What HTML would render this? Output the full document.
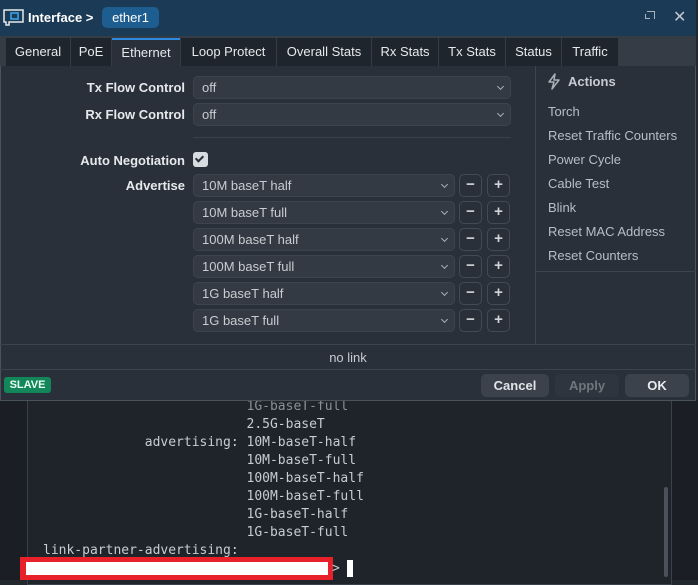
<!DOCTYPE html>
<html><head><style>
*{box-sizing:border-box;margin:0;padding:0}
body{width:698px;height:580px;overflow:hidden;background:#23282f;font-family:"Liberation Sans",sans-serif;position:relative;font-size:13px}
.abs{position:absolute}
.term{left:0;top:400px;width:698px;height:180px;background:#1b1f25}
.tbox{left:27px;top:395px;width:645px;height:190px;border:1px solid #3a414a;background:#1f242b}
.mono{font-family:"DejaVu Sans Mono","Liberation Mono",monospace;font-size:13px;color:#c7ccd2;white-space:pre;line-height:18px}
.dlg{left:0;top:0;width:696px;height:401px;background:#2a3039;border:1px solid #4a525c;border-top:none}
.title{left:0;top:0;width:696px;height:36px;background:#1b3a56}
.tabs{left:0;top:36px;width:696px;height:30px;background:#363c45}
.tab{position:absolute;top:38px;height:28px;background:#1f252d;color:#e6e9ec;font-size:13px;line-height:28px;text-align:center}
.lbl{position:absolute;color:#e6e9ec;font-weight:bold;font-size:13px;text-align:right;width:180px;left:5px}
.sel{position:absolute;height:23px;background:#343a43;border:1px solid #3d444d;border-radius:5px;color:#c9cdd2;font-size:13px;line-height:21px;padding-left:8px}
.sel:after{content:"";position:absolute;right:7px;top:7px;width:4px;height:4px;border-right:1.3px solid #aab0b7;border-bottom:1.3px solid #aab0b7;transform:rotate(45deg)}
.btn{position:absolute;width:23px;height:23px;border:1px solid #434a53;border-radius:5px;color:#d0d4d8;font-weight:bold;text-align:center;line-height:20px;font-size:15px}
.act{position:absolute;left:548px;color:#b7bec6;font-size:13px}
.fb{position:absolute;top:374px;height:23px;border-radius:5px;font-weight:bold;font-size:13px;text-align:center;line-height:23px}
</style></head><body>
<div class="abs term"></div>
<div class="abs tbox"></div>
<div class="abs mono" style="left:43px;top:398px"><span style="color:#8a9098">                          1G-baseT-full</span>
                          2.5G-baseT
             advertising: 10M-baseT-half
                          10M-baseT-full
                          100M-baseT-half
                          100M-baseT-full
                          1G-baseT-half
                          1G-baseT-full
link-partner-advertising:</div>
<div class="abs" style="left:664px;top:487px;width:4px;height:90px;background:#4a525c;border-radius:2px"></div>
<div class="abs" style="left:20px;top:557px;width:313px;height:23px;background:#e8202a"></div>
<div class="abs" style="left:26px;top:562px;width:302px;height:13px;background:#fff"></div>
<div class="abs mono" style="left:332px;top:560px">&gt;</div>
<div class="abs" style="left:347px;top:560px;width:6px;height:17px;background:#fff"></div>

<div class="abs dlg"></div>
<div class="abs title"></div>
<svg class="abs" style="left:3px;top:8px" width="21" height="18" viewBox="0 0 21 18"><path d="M1 2h19v12H6v3H3v-3H1z" fill="none" stroke="#e6e9ec" stroke-width="1.5"/><rect x="8" y="5" width="7" height="6" fill="none" stroke="#3aa0e8" stroke-width="1.6"/></svg>
<div class="abs" style="left:28px;top:10px;color:#fff;font-weight:bold;font-size:13px">Interface &gt;</div>
<div class="abs" style="left:102px;top:7px;width:57px;height:21px;background:#1e5d8f;border-radius:5px;color:#fff;font-size:13px;line-height:21px;text-align:center">ether1</div>
<div class="abs" style="left:647px;top:11px;width:8px;height:8px;border-top:1.5px solid #aab3bd;border-right:1.5px solid #aab3bd"></div>
<div class="abs" style="left:645px;top:14px;width:5px;height:5px;border-bottom:1.5px solid #aab3bd;border-left:1.5px solid #aab3bd"></div>
<div class="abs" style="left:673px;top:7px;color:#c0c7cf;font-size:16px">✕</div>
<div class="abs tabs"></div>
<div class="tab" style="left:6px;width:64px">General</div>
<div class="tab" style="left:71px;width:40px">PoE</div>
<div class="tab" style="left:112px;width:68px;background:#2a3039;border-top:2px solid #2a8be0;line-height:25px">Ethernet</div>
<div class="tab" style="left:181px;width:95px">Loop Protect</div>
<div class="tab" style="left:277px;width:94px">Overall Stats</div>
<div class="tab" style="left:372px;width:66px">Rx Stats</div>
<div class="tab" style="left:439px;width:66px">Tx Stats</div>
<div class="tab" style="left:506px;width:55px">Status</div>
<div class="tab" style="left:562px;width:56px">Traffic</div>

<div class="lbl" style="top:80px">Tx Flow Control</div>
<div class="sel" style="left:193px;top:76px;width:318px">off</div>
<div class="lbl" style="top:107px">Rx Flow Control</div>
<div class="sel" style="left:193px;top:103px;width:318px">off</div>
<div class="abs" style="left:193px;top:137px;width:318px;height:1px;background:#3a414a"></div>
<div class="lbl" style="top:153px">Auto Negotiation</div>
<div class="abs" style="left:193px;top:152px;width:15px;height:15px;background:#d8dce0;border-radius:3px"></div>
<div class="abs" style="left:197px;top:154px;width:5px;height:8px;border-right:2px solid #2a3039;border-bottom:2px solid #2a3039;transform:rotate(45deg)"></div>
<div class="lbl" style="top:178px">Advertise</div>

<div class="sel" style="left:193px;top:174px;width:262px">10M baseT half</div>
<div class="sel" style="left:193px;top:201px;width:262px">10M baseT full</div>
<div class="sel" style="left:193px;top:228px;width:262px">100M baseT half</div>
<div class="sel" style="left:193px;top:255px;width:262px">100M baseT full</div>
<div class="sel" style="left:193px;top:282px;width:262px">1G baseT half</div>
<div class="sel" style="left:193px;top:309px;width:262px">1G baseT full</div>
<div class="btn" style="left:459px;top:174px">−</div><div class="btn" style="left:487px;top:174px">+</div>
<div class="btn" style="left:459px;top:201px">−</div><div class="btn" style="left:487px;top:201px">+</div>
<div class="btn" style="left:459px;top:228px">−</div><div class="btn" style="left:487px;top:228px">+</div>
<div class="btn" style="left:459px;top:255px">−</div><div class="btn" style="left:487px;top:255px">+</div>
<div class="btn" style="left:459px;top:282px">−</div><div class="btn" style="left:487px;top:282px">+</div>
<div class="btn" style="left:459px;top:309px">−</div><div class="btn" style="left:487px;top:309px">+</div>

<div class="abs" style="left:535px;top:66px;width:1px;height:278px;background:#3d444d"></div>
<div class="abs" style="left:536px;top:271px;width:160px;height:1px;background:#3d444d"></div>
<svg class="abs" style="left:546px;top:73px" width="16" height="17" viewBox="0 0 16 17"><path d="M9 1L3 9h5l-2 7 7-9H8z" fill="none" stroke="#aab0b7" stroke-width="1.5" stroke-linejoin="round"/></svg>
<div class="abs" style="left:568px;top:74px;color:#c6ccd2;font-weight:bold;font-size:13px">Actions</div>
<div class="act" style="top:104px">Torch</div>
<div class="act" style="top:128px">Reset Traffic Counters</div>
<div class="act" style="top:152px">Power Cycle</div>
<div class="act" style="top:176px">Cable Test</div>
<div class="act" style="top:200px">Blink</div>
<div class="act" style="top:224px">Reset MAC Address</div>
<div class="act" style="top:248px">Reset Counters</div>

<div class="abs" style="left:0;top:344px;width:696px;height:1px;background:#3d444d"></div>
<div class="abs" style="left:0;top:350px;width:696px;text-align:center;color:#c6ccd2;font-size:13px">no link</div>
<div class="abs" style="left:0;top:369px;width:696px;height:1px;background:#3d444d"></div>
<div class="abs" style="left:4px;top:377px;width:47px;height:16px;background:#14875a;border-radius:3px;color:#e8fff4;font-weight:bold;font-size:11px;text-align:center;line-height:16px">SLAVE</div>
<div class="fb" style="left:481px;width:68px;background:#3b424b;color:#e0e4e8">Cancel</div>
<div class="fb" style="left:555px;width:64px;background:#2f353e;color:#6f767e">Apply</div>
<div class="fb" style="left:625px;width:64px;background:#3b424b;color:#e8ecf0">OK</div>
</body></html>
